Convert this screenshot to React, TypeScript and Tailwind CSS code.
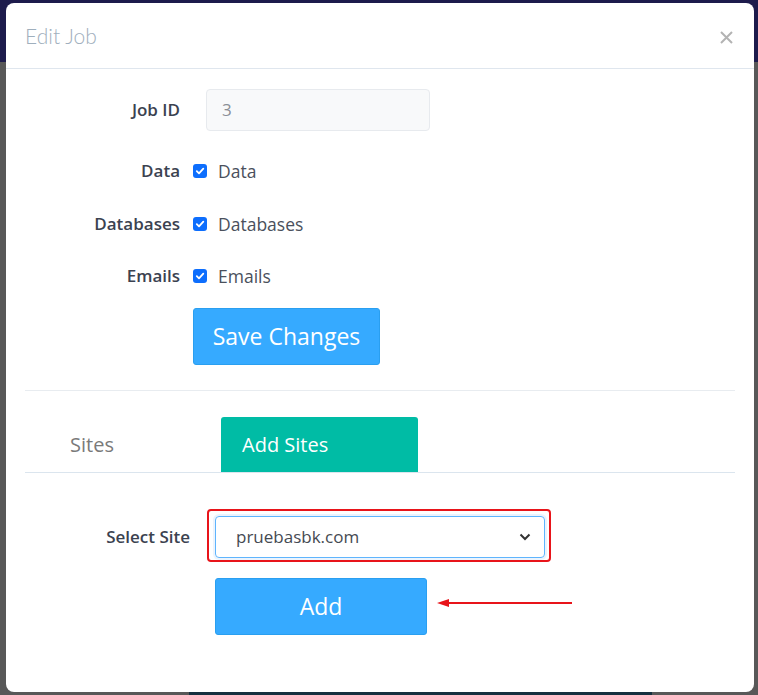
import React from "react";

function Check() {
  return (
    <span className="flex h-[14px] w-[14px] items-center justify-center rounded-[3px] bg-[#0d6efd]">
      <svg width="10" height="10" viewBox="0 0 10 10">
        <path d="M1.8 5.2 L4 7.4 L8.3 2.6" fill="none" stroke="#fff" strokeWidth="1.8" strokeLinecap="round" strokeLinejoin="round" />
      </svg>
    </span>
  );
}

function CheckRow({ label, mt }: { label: string; mt: string }) {
  return (
    <div className={`flex h-[24px] items-center ${mt}`}>
      <div className="w-[174px] text-right text-[17px] font-semibold text-[#3b4250]">{label}</div>
      <div className="ml-[13px] flex items-center">
        <Check />
        <span className="ml-[11px] text-[17.5px] text-[#4a505c]">{label}</span>
      </div>
    </div>
  );
}

export default function App() {
  return (
    <div className="relative h-[695px] w-[758px] overflow-hidden bg-[#585858]" style={{ fontFamily: '"Open Sans", "Liberation Sans", sans-serif' }}>
      {/* background page under overlay */}
      <div className="flex h-full flex-col">
        <div className="h-[62px] bg-[#1d1b4c]" />
        <div className="flex-1 bg-[#585858]" />
        <div className="ml-[189px] h-[3px] w-[463px] bg-[#15303f]" />
      </div>

      {/* modal */}
      <div className="absolute left-[6px] top-[3px] flex h-[689px] w-[748px] flex-col rounded-[8px] bg-white">
        <div className="flex h-[66px] items-center justify-between border-b border-[#dfe6ee] pl-[19px] pr-[21px]">
          <span className="text-[21px] font-light text-[#9fafbd]" style={{ fontFamily: 'Lato, "Open Sans", sans-serif' }}>Edit Job</span>
          <svg width="13" height="13" viewBox="0 0 13 13" className="mt-[4px]">
            <path d="M1 1 L12 12 M12 1 L1 12" stroke="#b3b3b3" strokeWidth="2" />
          </svg>
        </div>

        <div className="mt-[20px] flex h-[42px] items-center">
          <div className="w-[174px] text-right text-[17px] font-semibold text-[#3b4250]">Job ID</div>
          <div className="ml-[26px] flex h-[42px] w-[224px] items-center rounded-[4px] border border-[#e7eaee] bg-[#f8f9fa] pl-[15px] text-[17px] text-[#8a8f96]">
            3
          </div>
        </div>

        <CheckRow label="Data" mt="mt-[28px]" />
        <CheckRow label="Databases" mt="mt-[29px]" />
        <CheckRow label="Emails" mt="mt-[28px]" />

        <div className="ml-[187px] mt-[20px] flex h-[57px] w-[187px] items-center justify-center rounded-[3px] border border-[#2a9ff0] bg-[#36aaff] text-[23px] text-white">
          Save Changes
        </div>

        <div className="mx-[19px] mt-[25px] h-px bg-[#e8ecf0]" />

        <div className="mx-[19px] mt-[26px] flex border-b border-[#dbe5ee] pl-[24px]">
          <div className="flex h-[55px] w-[172px] items-center pl-[21px] text-[20px] text-[#7a7a7a]">Sites</div>
          <div className="flex h-[55px] w-[197px] items-center rounded-t-[3px] bg-[#00bca5] pl-[21px] text-[20px] text-white">Add Sites</div>
        </div>

        <div className="mt-[36px] flex items-center">
          <div className="w-[184px] pt-[2px] text-right text-[17px] font-semibold text-[#3b4250]">Select Site</div>
          <div className="ml-[17px] rounded-[4px] border-2 border-[#e8141a] pb-[2px] pl-[6px] pr-[4px] pt-[5px]">
            <div className="flex h-[42px] w-[330px] items-center justify-between rounded-[4px] border border-[#5fb4fd] pl-[20px] pr-[13px] text-[17px] text-[#454a52] shadow-[0_0_0_2px_rgba(120,180,250,0.15)]">
              <span>pruebasbk.com</span>
              <svg width="12" height="8" viewBox="0 0 12 8">
                <path d="M1.5 1.5 L6 6 L10.5 1.5" fill="none" stroke="#333" strokeWidth="2" />
              </svg>
            </div>
          </div>
        </div>

        <div className="ml-[209px] mt-[16px] flex h-[57px] w-[212px] items-center justify-center rounded-[3px] border border-[#2a9ff0] bg-[#36aaff] text-[23px] text-white">
          Add
        </div>
      </div>

      {/* annotation arrow */}
      <svg className="absolute left-[436px] top-[597px]" width="138" height="12" viewBox="0 0 138 12">
        <path d="M10 6 L136 6" stroke="#e8141a" strokeWidth="2" />
        <path d="M1 6 L13 2 L13 10 Z" fill="#e8141a" />
      </svg>
    </div>
  );
}
